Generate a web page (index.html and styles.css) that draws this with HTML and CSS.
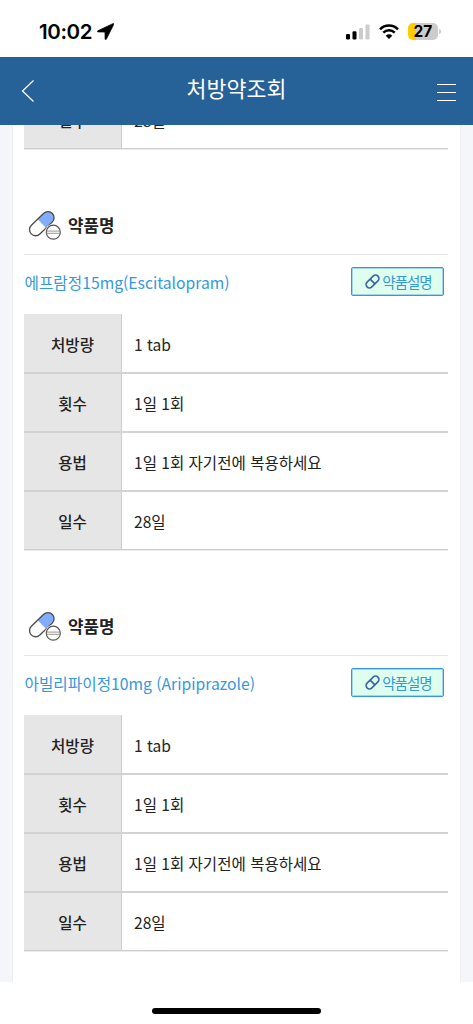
FILE: index.html
```html
<!DOCTYPE html>
<html lang="ko">
<head>
<meta charset="utf-8">
<title>처방약조회</title>
<link rel="stylesheet" href="styles.css">
</head>
<body>
<svg class="defs" width="0" height="0" aria-hidden="true">
  <symbol id="pills" viewBox="0 0 34 32">
    <g transform="rotate(-44 13.8 13.7)">
      <rect x="-0.9" y="7.6" width="29.4" height="12.2" rx="6.1" fill="#fff"/>
      <path d="M14 7.6h8.4a6.1 6.1 0 0 1 0 12.200H14z" fill="#82adff"/>
      <rect x="-0.9" y="7.6" width="29.4" height="12.2" rx="6.1" fill="none" stroke="#4b4945" stroke-width="1.3"/>
    </g>
    <circle cx="25.3" cy="22.2" r="8.300" fill="#fff"/>
    <circle cx="25.3" cy="22.2" r="7" fill="#fff" stroke="#575450" stroke-width="1.2"/>
    <path d="M18.600 21.100H32M18.600 23.300H32" stroke="#8d8a87" stroke-width=".9"/>
  </symbol>
  <symbol id="capsule" viewBox="0 0 16 16">
    <g transform="rotate(-45 8 8)" fill="none" stroke="#3a62a8" stroke-width="1.7">
      <rect x="-.2" y="4.400" width="16.400" height="7.200" rx="3.600"/>
      <path d="M8 4.400v7.200"/>
    </g>
  </symbol>
</svg>

<div class="screen">
  <div class="status">
    <div class="clock">10:02
      <svg class="location" viewBox="0 0 16 16"><path d="M15 .6.8 7.3c-.7.4-.5 1.1.2 1.1l6.5.1.1 6.5c0 .7.9.8 1.2.2L15.700 1.400C16 .7 15.600.3 15 .6z" stroke="#000" stroke-width=".7"/></svg>
    </div>
    <div class="indicators">
      <svg class="signal" viewBox="0 0 24 16"><rect y="10" width="4" height="5.500" rx="1.200"/><rect x="6.500" y="7.300" width="4" height="8.200" rx="1.200"/><g fill="#ccc"><rect x="13" y="4" width="4" height="11.500" rx="1.200"/><rect x="19.500" y=".5" width="4" height="15" rx="1.200"/></g></svg>
      <svg class="wifi" viewBox="0 0 20 15"><g fill="none" stroke="#000" stroke-width="2.500"><path d="M1 5.300a12.800 12.800 0 0 1 18 0"/><path d="M4.300 8.700a8.100 8.100 0 0 1 11.400 0"/></g><path d="M10 15 6.700 11.700a4.700 4.700 0 0 1 6.600 0z"/></svg>
      <div class="battery"><span class="level">27</span><span class="nub"></span></div>
    </div>
  </div>

  <header class="topbar">
    <svg class="back" viewBox="0 0 14 24"><path d="M12.500 1.500 1.500 12l11 10.500"/></svg>
    <h1>처방약조회</h1>
    <div class="menu"><i></i><i></i><i></i></div>
  </header>

  <main class="scroll">
    <div class="card">
      <div class="clipped">
        <dl class="details">
          <dt>일수</dt><dd>28일</dd>
        </dl>
      </div>

      <section class="drug">
        <h2><svg class="pills"><use href="#pills"/></svg>약품명</h2>
        <div class="name-row">
          <span class="name">에프람정15mg(Escitalopram)</span>
          <button class="info"><svg><use href="#capsule"/></svg>약품설명</button>
        </div>
        <dl class="details">
          <dt>처방량</dt><dd>1 tab</dd>
          <dt>횟수</dt><dd>1일 1회</dd>
          <dt>용법</dt><dd>1일 1회 자기전에 복용하세요</dd>
          <dt>일수</dt><dd>28일</dd>
        </dl>
      </section>

      <section class="drug">
        <h2><svg class="pills"><use href="#pills"/></svg>약품명</h2>
        <div class="name-row">
          <span class="name">아빌리파이정10mg (Aripiprazole)</span>
          <button class="info"><svg><use href="#capsule"/></svg>약품설명</button>
        </div>
        <dl class="details">
          <dt>처방량</dt><dd>1 tab</dd>
          <dt>횟수</dt><dd>1일 1회</dd>
          <dt>용법</dt><dd>1일 1회 자기전에 복용하세요</dd>
          <dt>일수</dt><dd>28일</dd>
        </dl>
      </section>
    </div>
  </main>

  <div class="home"><span></span></div>
</div>
</body>
</html>
```
FILE: styles.css
```css
* { box-sizing: border-box; }

body, h1, h2, dl, dd { margin: 0; }

body {
  background: #fff;
  color: #222;
  font-family: "Noto Sans CJK KR", sans-serif;
  font-size: 15.55px;
}

svg { display: block; flex: none; }
.defs { position: absolute; }

.screen {
  display: flex;
  flex-direction: column;
  height: 1024px;
  overflow: hidden;
}

/* Status bar */
.status {
  display: flex;
  flex: none;
  justify-content: space-between;
  height: 57px;
  padding: 7px 32px 0 39px;
  color: #000;
  font-family: Inter, sans-serif;
}
.clock {
  display: flex;
  align-items: center;
  gap: 5px;
  padding-bottom: 1px;
  font-size: 20.5px;
  font-weight: 600;
  letter-spacing: -0.4px;
}
.location { width: 17px; height: 17px; }
.indicators { display: flex; align-items: center; padding-bottom: 1px; }
.signal { width: 24px; height: 16px; margin-right: 9px; }
.wifi { width: 20px; height: 15px; margin-right: 9px; }
.battery { display: flex; align-items: center; gap: 1px; }
.level {
  width: 30px;
  height: 17px;
  border-radius: 5px;
  background: linear-gradient(90deg, #fc0 27%, #ccc 27%);
  font-size: 15.500px;
  font-weight: 700;
  line-height: 17px;
  text-align: center;
}
.nub { width: 2px; height: 5px; border-radius: 0 2px 2px 0; background: #ccc; }

/* App bar */
.topbar {
  display: flex;
  flex: none;
  align-items: center;
  justify-content: space-between;
  height: 68px;
  padding: 0 17px 0 21px;
  background: #266298;
  color: #fff;
}
.back {
  width: 14px;
  height: 24px;
  fill: none;
  stroke: #fff;
  stroke-width: 1.2;
}
.topbar h1 {
  padding: 0 0 6px 1px;
  font-size: 21.7px;
  font-weight: 400;
  line-height: 32px;
}
.menu { display: grid; gap: 7px; width: 19px; padding-top: 2px; }
.menu i { height: 1px; background: #fff; }

/* Prescription list */
.scroll {
  flex: none;
  height: 857px;
  padding: 0 12px;
  overflow: hidden;
  background: #f5f6f9;
}
.card {
  height: 100%;
  padding: 0 12px 0 11px;
  border: solid #eeeff0;
  border-width: 0 1px;
  background: #fff;
}
.clipped {
  display: flex;
  flex-direction: column;
  justify-content: flex-end;
  height: 25px;
  overflow: hidden;
}
.clipped .details { flex: none; }

.drug h2 {
  display: flex;
  align-items: center;
  gap: 6px;
  height: 105px;
  padding: 46px 0 0 4px;
  border-bottom: 1px solid #e4e4e4;
  font-size: 16.8px;
  font-weight: 700;
}
.pills { width: 34px; height: 32px; margin-top: 2px; }

.name-row {
  display: flex;
  align-items: center;
  justify-content: space-between;
  height: 59px;
  padding: 0 4px 6px 0;
}
.name { padding: 1px 0 0 0.5px; color: #3498db; font-size: 15.7px; }

.info {
  display: flex;
  align-items: center;
  justify-content: center;
  gap: 2px;
  width: 93px;
  height: 29px;
  padding: 0 0 0 2px;
  border: 1px solid #3498db;
  border-radius: 2px;
  box-shadow: inset 0 0 0 1px #a5d5ea;
  background: #dfffee;
  color: #3498db;
  font: 400 14.500px/24px "Noto Sans CJK KR", sans-serif;
  letter-spacing: -1px;
}
.info svg { width: 15px; height: 15px; }

.details {
  display: grid;
  grid-template-columns: 98px 1fr;
  grid-auto-rows: 59px;
  padding-top: 1px;
  background: linear-gradient(90deg, #e6e6e6 97px, #ccc 97px, #ccc 98px, #fff 98px);
}
.details dt, .details dd {
  display: flex;
  align-items: center;
  padding-top: 1px;
  border-bottom: 2px solid #d2d2d2;
}
.details dt { justify-content: center; font-weight: 500; padding-right: 1px; }
.details dd { padding-left: 12px; }
.details dt:nth-last-of-type(1),
.details dd:nth-last-of-type(1) {
  border-bottom: 1px solid #ccc;
  box-shadow: 0 1px #ececec;
  height: 58px;
}

/* Home indicator */
.home { display: flex; justify-content: center; padding-top: 26px; }
.home span { width: 169px; height: 6px; border-radius: 3px; background: #000; }
```
